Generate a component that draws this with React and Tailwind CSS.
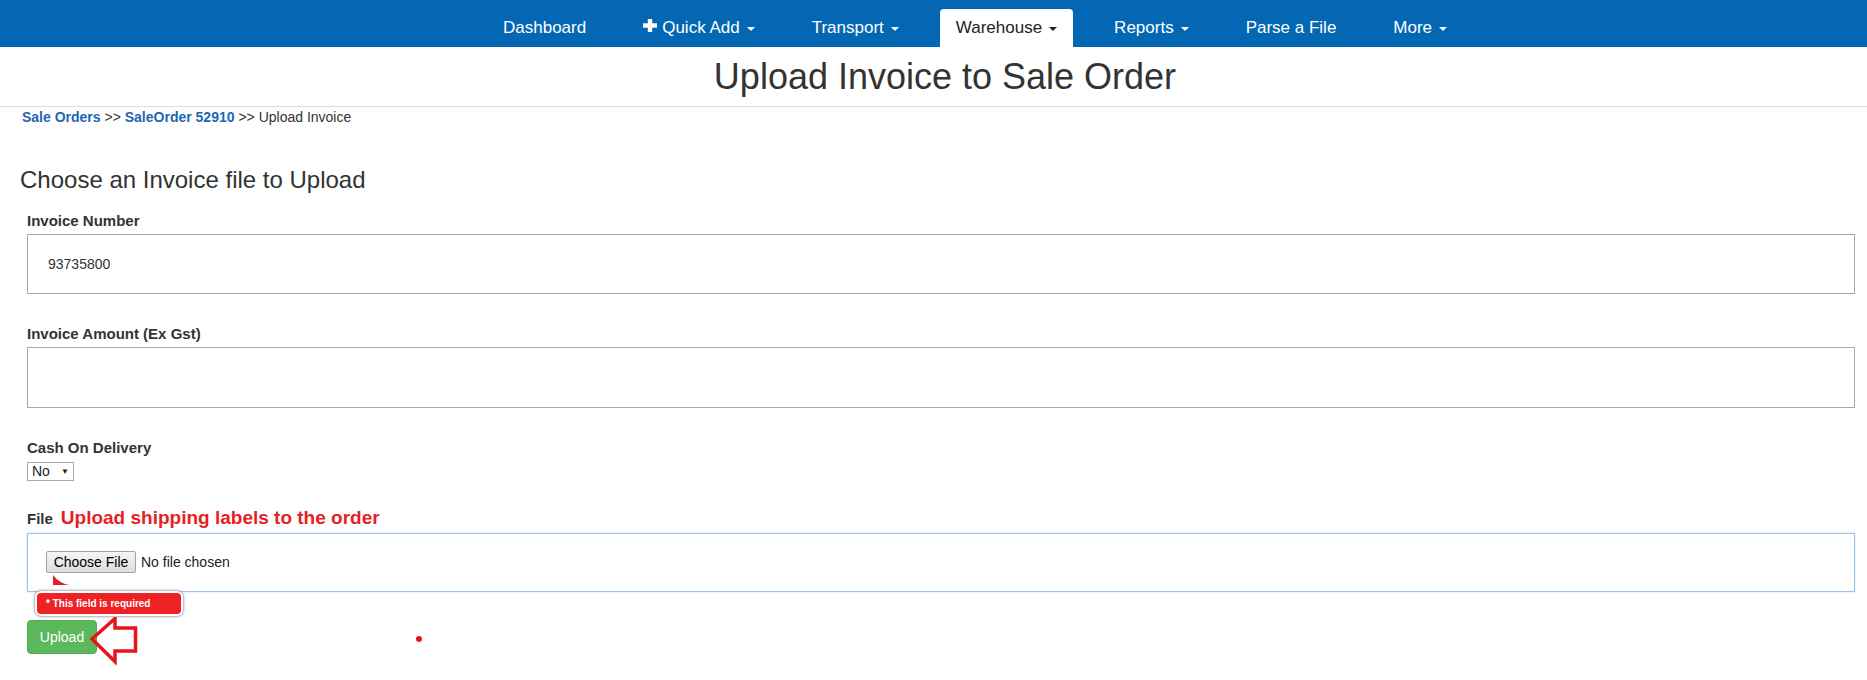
import React from 'react'

const NAV = [
    { label: "Dashboard" },
    { label: "Quick Add", plus: true, caret: true },
    { label: "Transport", caret: true },
    { label: "Warehouse", caret: true, active: true },
    { label: "Reports", caret: true },
    { label: "Parse a File" },
    { label: "More", caret: true },
];

function Caret({ dark }) {
    return (
        <span
            className={`inline-block align-middle ml-[7px] w-0 h-0 border-t-[4px] border-x-[4px] border-x-transparent ${dark ? "border-t-[#222]" : "border-t-white"}`}
        />
    );
}

function Navbar() {
    return (
        <div className="h-[47px] bg-[#0367b4] flex items-end pl-[487px] gap-[25px]">
            {NAV.map((item) => (
                <div
                    key={item.label}
                    className={`h-[38px] px-4 pt-[9px] leading-[20px] text-[17px] whitespace-nowrap rounded-t-[4px] ${item.active ? "bg-white text-[#222]" : "text-white"}`}
                >
                    {item.plus && (
                        <svg width="14" height="13" viewBox="0 0 14 13" className="inline-block align-[1px] mr-[5px]">
                            <rect x="4.8" y="0" width="4.4" height="13" fill="white" />
                            <rect x="0" y="4.3" width="14" height="4.4" fill="white" />
                        </svg>
                    )}
                    {item.label}
                    {item.caret && <Caret dark={item.active} />}
                </div>
            ))}
        </div>
    );
}

function Label({ children }) {
    return <div className="text-[15px] font-bold leading-[20px] text-[#333]">{children}</div>;
}

export default function App() {
    return (
        <div className="min-h-[680px] bg-white font-['Liberation_Sans',Arial,sans-serif] text-[#333]">
            <Navbar />

            {/* Page title */}
            <div className="pt-[10px] pb-[9px] pl-[23px] border-b border-[#dddddd] text-center">
                <h1 className="text-[36px] leading-[40px] text-[#333]">Upload Invoice to Sale Order</h1>
            </div>

            {/* Breadcrumb */}
            <div className="pl-[22px] text-[14px] leading-[20px] text-[#333]">
                <span className="font-bold text-[#2266b0]">Sale Orders</span>
                {" >> "}
                <span className="font-bold text-[#2266b0]">SaleOrder 52910</span>
                {" >> Upload Invoice"}
            </div>

            <h3 className="mt-[40px] pl-[20px] text-[24px] leading-[26px] text-[#333]">Choose an Invoice file to Upload</h3>

            <div className="pl-[27px] pr-[12px]">
                <div className="mt-[18px]">
                    <Label>Invoice Number</Label>
                    <div className="mt-[3px] h-[60px] border border-[#a9a9a9] flex items-center pl-[20px] text-[14px] text-[#333]">
                        93735800
                    </div>
                </div>

                <div className="mt-[30px]">
                    <Label>Invoice Amount (Ex Gst)</Label>
                    <div className="mt-[3px] h-[61px] border border-[#a9a9a9]" />
                </div>

                <div className="mt-[30px]">
                    <Label>Cash On Delivery</Label>
                    <div className="mt-[4px] w-[47px] h-[19px] border border-[#a9a9a9] bg-white flex items-center pl-[4px] text-[14px] text-[#222]">
                        <span>No</span>
                        <span className="ml-[11px] text-[8px] leading-none">▼</span>
                    </div>
                </div>

                <div className="mt-[26px] flex items-baseline leading-[22px]">
                    <span className="text-[15px] font-bold text-[#333]">File</span>
                    <span className="ml-[8px] text-[19px] font-bold text-[#e61e26]">Upload shipping labels to the order</span>
                </div>

                <div className="relative mt-[3px]">
                    <div className="h-[59px] border border-[#9fc3ee] shadow-[0_0_2px_rgba(102,175,233,0.4)] pt-[17px] pl-[18px] flex items-start">
                        <div className="h-[22px] w-[90px] border border-[#a3a3a3] rounded-[2px] bg-gradient-to-b from-[#f6f6f6] to-[#dedede] flex items-center justify-center text-[14px] text-black">
                            Choose File
                        </div>
                        <span className="ml-[5px] leading-[22px] text-[14px] text-[#222]">No file chosen</span>
                    </div>

                    {/* validation tooltip */}
                    <svg width="16" height="10" viewBox="0 0 16 10" className="absolute left-[26px] top-[42px]">
                        <path d="M0 0 L0 10 L16 10 Q6 8 0 0 Z" fill="#e61e26" />
                    </svg>
                    <div className="absolute left-[8px] top-[58px] w-[148px] h-[25px] rounded-[6px] bg-[#ee2125] border-2 border-white shadow-[0_0_3px_#555] flex items-center pl-[9px] text-[10px] font-bold text-white whitespace-nowrap">
                        * This field is required
                    </div>
                </div>

                <div className="relative mt-[28px] h-[44px]">
                    <button className="w-[70px] h-[34px] rounded-[4px] bg-[#5cb85c] border border-[#4cae4c] text-white text-[14px]">
                        Upload
                    </button>
                    {/* annotation arrow */}
                    <svg width="50" height="50" viewBox="0 0 50 50" className="absolute left-[63px] top-[-3px]">
                        <path
                            d="M2 22 L25 1.5 L25 11 L45.5 11 L45.5 34 L25 34 L25 44.5 Z"
                            fill="none"
                            stroke="#e8141c"
                            strokeWidth="3.5"
                            strokeLinejoin="miter"
                        />
                    </svg>
                    <span className="absolute left-[389px] top-[16px] w-[6px] h-[6px] rounded-full bg-[#e8141c]" />
                </div>
            </div>
        </div>
    );
}
